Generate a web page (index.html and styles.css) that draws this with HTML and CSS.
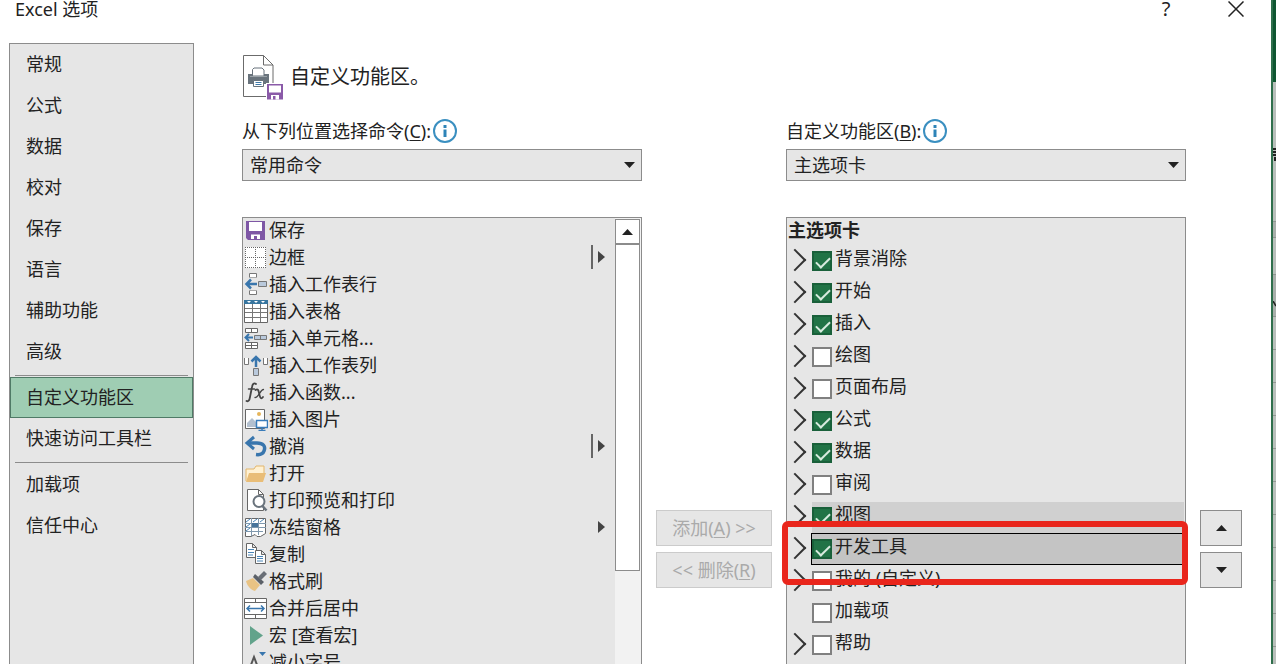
FILE: index.html
```html
<!DOCTYPE html>
<html lang="zh-CN">
<head>
<meta charset="utf-8">
<meta name="viewport" content="width=device-width, initial-scale=1">
<title>Excel 选项</title>
<link rel="stylesheet" href="styles.css">
</head>
<body>
<div class="dialog">
  <header class="titlebar">
    <h1 class="title">Excel 选项</h1>
    <button class="title-button" type="button" aria-label="帮助"><span class="help-mark">?</span></button>
    <button class="title-button" type="button" aria-label="关闭"><svg width="16" height="16" viewBox="0 0 16 16"><path d="M.5.5l15 15M15.500.5l-15 15" stroke="#222" stroke-width="1.500"/></svg></button>
  </header>
  <div class="body">
    <nav class="nav">
      <a class="nav-item" href="#">常规</a>
      <a class="nav-item" href="#">公式</a>
      <a class="nav-item" href="#">数据</a>
      <a class="nav-item" href="#">校对</a>
      <a class="nav-item" href="#">保存</a>
      <a class="nav-item" href="#">语言</a>
      <a class="nav-item" href="#">辅助功能</a>
      <a class="nav-item" href="#">高级</a>
      <hr class="nav-rule">
      <a class="nav-item nav-item-current" href="#" aria-current="page">自定义功能区</a>
      <a class="nav-item" href="#">快速访问工具栏</a>
      <hr class="nav-rule">
      <a class="nav-item" href="#">加载项</a>
      <a class="nav-item" href="#">信任中心</a>
    </nav>
    <main class="main">
      <div class="heading">
        <svg width="42" height="46" viewBox="0 0 42 46" fill="none">
          <path d="M1.500 1.500h20l9.500 9.500v31.500H1.500z" fill="#fff" stroke="#6b6b6b"/>
          <path d="M21.500 1.500V11H31" stroke="#6b6b6b"/>
          <path d="M6 20h21v10H6z" fill="#69737c"/>
          <path d="M10.500 22v-6.500l1.500-1.500h8l2 2v6z" fill="#fff" stroke="#69737c"/>
          <path d="M8 22.500h17" stroke="#9aa2a8"/>
          <path d="M11.500 26.500h10v6h-10z" fill="#fff" stroke="#69737c"/>
          <path d="M13.500 28.500h6m-6 2h6" stroke="#3f79a8"/>
          <path d="M24 29h19v18H24z" fill="#fff"/>
          <path d="M25 30h16v15.500H25z" fill="#8a5aa8"/>
          <path d="M27 31.500h12v7H27z" fill="#fff"/>
          <path d="M29 41h8v4.500h-8z" fill="#fff"/><path d="M31 42h2.500v3.500H31z" fill="#8a5aa8"/>
        </svg>
        <h2 class="heading-text">自定义功能区。</h2>
      </div>

      <div class="field field-commands">
        <label class="field-label" for="commands">从下列位置选择命令(<u>C</u>):</label>
        <svg class="info" width="24" height="24" viewBox="0 0 24 24"><circle cx="12" cy="12" r="11" fill="#fff" stroke="#3a8fc0" stroke-width="2"/><path d="M10.500 6h3v3h-3zM10.500 10.500h3V18h-3z" fill="#2e84b8"/></svg>
        <div class="select-wrap">
          <select class="select" id="commands"><option>常用命令</option></select>
          <svg class="select-arrow" width="11" height="6" viewBox="0 0 11 6"><path d="M0 0h11L5.500 6z" fill="#222"/></svg>
        </div>
      </div>
      <div class="field field-tabs">
        <label class="field-label" for="tabs">自定义功能区(<u>B</u>):</label>
        <svg class="info" width="24" height="24" viewBox="0 0 24 24"><circle cx="12" cy="12" r="11" fill="#fff" stroke="#3a8fc0" stroke-width="2"/><path d="M10.500 6h3v3h-3zM10.500 10.500h3V18h-3z" fill="#2e84b8"/></svg>
        <div class="select-wrap">
          <select class="select" id="tabs"><option>主选项卡</option></select>
          <svg class="select-arrow" width="11" height="6" viewBox="0 0 11 6"><path d="M0 0h11L5.500 6z" fill="#222"/></svg>
        </div>
      </div>

      <div class="panel commands">
        <ul class="list">
          <li><button class="command" type="button"><svg class="icon" viewBox="0 0 24 24"><path d="M2 3h19v19H4l-2-2z" fill="#7e57a5"/><path d="M5 4h13v9H5z" fill="#fff"/><path d="M6 16h11v6H6z" fill="#7e57a5"/><path d="M7 16.500h9V21h-3v-3h-3v3H7z" fill="#fff"/></svg>保存</button></li>
          <li><button class="command" type="button"><svg class="icon" viewBox="0 0 24 24"><path d="M1 2h21v21H1z" fill="#fff"/><path d="M1 2.500h21M1 12.500h21M1 22.500h21M1.500 2v21M11.500 2v21M21.500 2v21" stroke="#666" stroke-dasharray="1 1"/></svg>边框<span class="split"></span><svg class="more" width="7" height="12" viewBox="0 0 7 12"><path d="M0 0l7 6-7 6z"/></svg></button></li>
          <li><button class="command" type="button"><svg class="icon" viewBox="0 0 24 24" fill="#fff"><path d="M5.500 5V1.500h7V5M5.500 19v3.500h7V19" stroke="#777"/><path d="M5 5.500h8M5 18.500h8" stroke="#aaa"/><path d="M14.500 9.500h8v5h-8z" fill="#b9c9dc" stroke="#777"/><path d="M13 12H3M7 7.500L2.500 12 7 16.500" fill="none" stroke="#3976ad" stroke-width="2.500"/></svg>插入工作表行</button></li>
          <li><button class="command" type="button"><svg class="icon" viewBox="0 0 24 24"><path d="M.5 1.500h23v22H.5z" fill="#fff" stroke="#666"/><path d="M0 1h24v4H0z" fill="#37759f"/><path d="M3 2h4L5 4zM10 2h4l-2 2zM17 2h4l-2 2z" fill="#fff"/><path d="M1 9.500h22M1 13.500h22M1 18.500h22M8.500 5v18M16.500 5v18" stroke="#777"/></svg>插入表格</button></li>
          <li><button class="command" type="button"><svg class="icon" viewBox="0 0 24 24" fill="#fff"><path d="M1.500 2.500h12v4h-12zM7.500 2.500v4M1.500 16.500h12v6h-12zM7.500 16.500v6M1.500 19.500h12" stroke="#666"/><path d="M10.500 9.500h12v4h-12zM16.500 9.500v4" fill="#b9c9dc" stroke="#777"/><path d="M9 11.500H2M5 8l-3.500 3.500L5 15" fill="none" stroke="#3976ad" stroke-width="2"/></svg>插入单元格...</button></li>
          <li><button class="command" type="button"><svg class="icon" viewBox="0 0 24 24" fill="none"><path d="M.5 5v6.500h4V5M19.500 5v6.500h4V5" fill="#fff" stroke="#777"/><path d="M9.500 15.500h5v7h-5z" fill="#b9c9dc" stroke="#777"/><path d="M12 14V5M7.500 8.500L12 4l4.500 4.500" stroke="#3976ad" stroke-width="2.500"/></svg>插入工作表列</button></li>
          <li><button class="command" type="button"><svg class="icon" viewBox="0 0 24 24" fill="none" stroke="#444" stroke-linecap="round"><path d="M12 4c-2-1.500-3.500 0-4 3L6 17c-.5 3-1.500 5-3.500 4" stroke-width="1.800"/><path d="M4.500 9h6" stroke-width="1.500"/><path d="M11.500 10c3-2 3 1 4 5s2 4 3.500 2" stroke-width="1.800"/><path d="M19.500 9.500c-3 0-5 8-8.500 8" stroke-width="1.300"/></svg>插入函数...</button></li>
          <li><button class="command" type="button"><svg class="icon" viewBox="0 0 24 24"><path d="M1.500 2.500h19v19h-19z" fill="#fff" stroke="#666"/><circle cx="15" cy="7" r="2" fill="#e6b55a"/><path d="M3 20v-4l5-5 5 5v4z" fill="#b3c0cf"/><path d="M12.500 13.500h11v7h-11z" fill="#fff" stroke="#397cba" stroke-width="1.500"/><path d="M18 20v3.500M14.500 23.500h7" stroke="#397cba" stroke-width="1.500"/></svg>插入图片</button></li>
          <li><button class="command" type="button"><svg class="icon" viewBox="0 0 24 24" fill="none" stroke="#3976ad"><path d="M3 9h10c6 0 9 3 7 8-1 3-4 4-8 3.500" stroke-width="3.500"/><path d="M10 3L3 9l7 6" stroke-width="3"/></svg>撤消<span class="split"></span><svg class="more" width="7" height="12" viewBox="0 0 7 12"><path d="M0 0l7 6-7 6z"/></svg></button></li>
          <li><button class="command" type="button"><svg class="icon" viewBox="0 0 24 24"><path d="M2 20V8h8l2-3h8v7" fill="#fff1d2" stroke="#e2b66d"/><path d="M2 21l3-9h17l-3 9z" fill="#e9bd77"/></svg>打开</button></li>
          <li><button class="command" type="button"><svg class="icon" viewBox="0 0 24 24" fill="none"><path d="M3.500 1.500h11l5 5v16h-16z" fill="#fff" stroke="#666"/><path d="M14.500 1.500v5h5" stroke="#666"/><circle cx="15" cy="13.500" r="5.500" fill="#fff" stroke="#69737c" stroke-width="2"/><path d="M18.500 18l4 4.500" stroke="#69737c" stroke-width="2.500"/></svg>打印预览和打印</button></li>
          <li><button class="command" type="button"><svg class="icon" viewBox="0 0 24 24"><path d="M1.500 3.500h20v15l-5 3H13l-2-2-4 2H1.500z" fill="#fff" stroke="#666"/><path d="M1 8.500h21M1 12.500h21M1 16.500h18M7.500 3v18M14.500 3v17" stroke="#7f98ad"/><path d="M8 8h6v4H8z" fill="#48749b"/><path d="M2 7l4-3M9 7l4-3M16 7l4-3M2 12l4-3M2 16l4-3" stroke="#4b86b8"/></svg>冻结窗格<svg class="more more-alone" width="7" height="12" viewBox="0 0 7 12"><path d="M0 0l7 6-7 6z"/></svg></button></li>
          <li><button class="command" type="button"><svg class="icon" viewBox="0 0 24 24" fill="#fff" stroke="#666"><path d="M2.500 1.500h6l4 4v10h-10zM8.500 1.500v4h4"/><path d="M4 7.500h6M4 10.500h6M4 13h5" stroke="#4b86b8"/><path d="M11.500 8.500h6l4 4v9h-10zM17.500 8.500v4h4"/><path d="M13 14.500h6M13 16.500h6M13 19h6" stroke="#4b86b8"/></svg>复制</button></li>
          <li><button class="command" type="button"><svg class="icon" viewBox="0 0 24 24"><path d="M2 12l7-3 7 7-5 6c-4-1-8-5-9-10z" fill="#e9c384"/><path d="M9 8l2-3 9 8-3 3z" fill="#5b6068"/><path d="M14 8l6-6 3 3-6 6z" fill="#696e76"/></svg>格式刷</button></li>
          <li><button class="command" type="button"><svg class="icon" viewBox="0 0 24 24" fill="none"><path d="M.5 2.500h22v20H.5z" fill="#fff" stroke="#666"/><path d="M0 6.500h23M0 18.500h23M11.500 2v4M11.500 19v4" stroke="#666"/><path d="M3 12.500h17M6 9.500l-3 3 3 3M17 9.500l3 3-3 3" stroke="#3976ad" stroke-width="1.500"/></svg>合并后居中</button></li>
          <li><button class="command" type="button"><svg class="icon" viewBox="0 0 24 24"><path d="M6 3l13 9.500L6 22z" fill="#62a38b"/></svg>宏 [查看宏]</button></li>
          <li><button class="command" type="button"><svg class="icon" viewBox="0 0 24 24"><path d="M5 20L10 7l5 13M7 15.500h6" fill="none" stroke="#555" stroke-width="2"/><path d="M15 2h7l-3.500 4z" fill="#3976ad"/></svg>减小字号</button></li>
        </ul>
        <div class="scrollbar">
          <button class="scroll-up" type="button" aria-label="向上滚动"><svg width="11" height="6" viewBox="0 0 11 6"><path d="M0 6h11L5.500 0z" fill="#222"/></svg></button>
          <div class="scroll-thumb"></div>
        </div>
      </div>

      <div class="transfer">
        <button class="box-button" type="button" disabled>添加(<u>A</u>) &gt;&gt;</button>
        <button class="box-button" type="button" disabled>&lt;&lt; 删除(<u>R</u>)</button>
      </div>

      <div class="tabs">
        <div class="panel tree">
          <div class="tree-title">主选项卡</div>
          <ul class="tree-list">
            <li class="node"><button class="expand" type="button" aria-label="展开"></button><label class="node-label"><input class="check" type="checkbox" checked>背景消除</label></li>
            <li class="node"><button class="expand" type="button" aria-label="展开"></button><label class="node-label"><input class="check" type="checkbox" checked>开始</label></li>
            <li class="node"><button class="expand" type="button" aria-label="展开"></button><label class="node-label"><input class="check" type="checkbox" checked>插入</label></li>
            <li class="node"><button class="expand" type="button" aria-label="展开"></button><label class="node-label"><input class="check" type="checkbox">绘图</label></li>
            <li class="node"><button class="expand" type="button" aria-label="展开"></button><label class="node-label"><input class="check" type="checkbox">页面布局</label></li>
            <li class="node"><button class="expand" type="button" aria-label="展开"></button><label class="node-label"><input class="check" type="checkbox" checked>公式</label></li>
            <li class="node"><button class="expand" type="button" aria-label="展开"></button><label class="node-label"><input class="check" type="checkbox" checked>数据</label></li>
            <li class="node"><button class="expand" type="button" aria-label="展开"></button><label class="node-label"><input class="check" type="checkbox">审阅</label></li>
            <li class="node"><button class="expand" type="button" aria-label="展开"></button><label class="node-label node-hover"><input class="check" type="checkbox" checked>视图</label></li>
            <li class="node"><button class="expand" type="button" aria-label="展开"></button><label class="node-label node-selected"><input class="check" type="checkbox" checked>开发工具</label></li>
            <li class="node"><button class="expand" type="button" aria-label="展开"></button><label class="node-label"><input class="check" type="checkbox">我的 (自定义)</label></li>
            <li class="node node-leaf"><label class="node-label"><input class="check" type="checkbox">加载项</label></li>
            <li class="node"><button class="expand" type="button" aria-label="展开"></button><label class="node-label"><input class="check" type="checkbox">帮助</label></li>
          </ul>
        </div>
        <div class="highlight"></div>
      </div>

      <div class="reorder">
        <button class="box-button" type="button" aria-label="上移"><svg width="11" height="6" viewBox="0 0 11 6"><path d="M0 6h11L5.500 0z" fill="#222"/></svg></button>
        <button class="box-button" type="button" aria-label="下移"><svg width="11" height="6" viewBox="0 0 11 6"><path d="M0 0h11L5.500 6z" fill="#222"/></svg></button>
      </div>
    </main>
  </div>
</div>
<div class="workbook">
  <div class="workbook-title"></div>
  <div class="workbook-ribbon"><svg width="3" height="14" viewBox="0 0 3 14"><path d="M0 1h3v2H0zM0 4h3v2H0zM0 7h3v2H0zM1 10h2v4H1z" fill="#222"/></svg></div>
  <div class="workbook-band"></div>
  <div class="workbook-bar"></div>
  <div class="workbook-head"><svg width="3" height="6" viewBox="0 0 3 6"><path d="M0 0l3 5" stroke="#222" stroke-width="1.500"/></svg></div>
  <div class="workbook-cells"></div>
</div>
</body>
</html>
```
FILE: styles.css
```css
* {
  box-sizing: border-box;
}

body {
  margin: 0;
  height: 100vh;
  display: flex;
  overflow: hidden;
  background: #fff;
  color: #222;
  font: 18px/24px "Noto Sans", "Noto Sans CJK SC", sans-serif;
}

button,
select,
input {
  margin: 0;
  padding: 0;
  border: 0;
  color: inherit;
  font: inherit;
}

button {
  background: none;
}

svg {
  flex: none;
}

u {
  text-underline-offset: 2px;
  text-decoration-thickness: 1px;
}

ul {
  margin: 0;
  padding: 0;
  list-style: none;
}

.dialog {
  flex: 1;
  min-width: 0;
  display: flex;
  flex-direction: column;
}

.titlebar {
  display: flex;
  align-items: flex-start;
  height: 43px;
  padding: 0 18px 0 15px;
}

.title {
  flex: 1;
  margin: 0;
  font-size: 18px;
  font-weight: 400;
  line-height: 18px;
}

.title-button {
  display: flex;
  align-items: center;
  justify-content: center;
  width: 34px;
  height: 18px;
  margin-left: 36px;
}

.help-mark {
  font-size: 20px;
  line-height: 18px;
}

.body {
  flex: 1;
  min-height: 0;
  display: flex;
  gap: 48px;
  padding: 0 29px 0 9px;
}

.nav {
  flex: none;
  width: 185px;
  border: 1px solid #8c8c8c;
  border-bottom: 0;
  background: #e6e6e6;
}

.nav-item {
  display: block;
  padding: 0 16px;
  color: inherit;
  line-height: 41px;
  text-decoration: none;
}

.nav-item-current {
  padding: 0 15px;
  border: 1px solid #4f7a66;
  background: #9fcdb3;
  line-height: 39px;
}

.nav-rule {
  height: 1px;
  margin: 3px 5px 1px;
  border: 0;
  background: #8c8c8c;
}

.main {
  flex: 1;
  min-width: 0;
  display: grid;
  grid-template-columns: minmax(0, 1fr) 116px minmax(0, 1fr) 42px;
  grid-template-rows: 46px 62px minmax(0, 1fr);
  column-gap: 14px;
  padding-top: 11px;
}

.heading {
  grid-column: 1 / -1;
  display: flex;
  align-items: center;
  gap: 6px;
}

.heading-text {
  margin: 0;
  font-size: 20px;
  font-weight: 400;
}

.field {
  margin-top: 19px;
  display: flex;
  flex-wrap: wrap;
  align-content: flex-start;
  row-gap: 6px;
}

.field-commands {
  grid-column: 1;
}

.field-tabs {
  grid-column: 3;
}

.info {
  margin-left: 2px;
}

.select-wrap {
  display: grid;
  flex: 0 0 100%;
  align-items: center;
}

.select {
  grid-area: 1 / 1;
  width: 100%;
  height: 32px;
  padding: 0 7px;
  appearance: none;
  border: 1px solid #8c8c8c;
  border-radius: 0;
  background: #e6e6e6;
}

.select-arrow {
  grid-area: 1 / 1;
  justify-self: end;
  margin-right: 7px;
  pointer-events: none;
}

.panel {
  min-height: 0;
  overflow: hidden;
  border: 1px solid #8c8c8c;
  border-bottom: 0;
  background: #e6e6e6;
}

.commands,
.transfer,
.tabs,
.reorder {
  grid-row: 3;
  margin-top: 55px;
}

.commands {
  grid-column: 1;
  display: flex;
}

.list {
  flex: 1;
  min-width: 0;
}

.command {
  display: flex;
  align-items: center;
  width: 100%;
  height: 27px;
  padding: 0 10px 4px 1px;
  white-space: nowrap;
}

.icon {
  width: 24px;
  height: 24px;
  margin-right: 1px;
}

.split {
  width: 2px;
  height: 24px;
  margin-left: auto;
  background: #666;
}

.more {
  margin-left: 5px;
  fill: #444;
}

.more-alone {
  margin-left: auto;
}

.scrollbar {
  flex: none;
  width: 26px;
  display: flex;
  flex-direction: column;
  padding: 1px 1px 0 0;
  background: #f2f2f2;
}

.scroll-up {
  display: flex;
  align-items: center;
  justify-content: center;
  height: 25px;
  border: 1px solid #8c8c8c;
  background: #fff;
}

.scroll-thumb {
  height: 327px;
  border: 1px solid #8c8c8c;
  background: #fff;
}

.transfer,
.reorder {
  display: flex;
  flex-direction: column;
  gap: 6px;
  padding-top: 293px;
}

.transfer {
  grid-column: 2;
}

.reorder {
  grid-column: 4;
}

.box-button {
  display: flex;
  align-items: center;
  justify-content: center;
  height: 36px;
  border: 1px solid #8c8c8c;
  background: #e6e6e6;
  white-space: pre;
}

.box-button:disabled {
  border-color: #cbcbcb;
  color: #aaa;
}

.tabs {
  grid-column: 3;
  display: flex;
  position: relative;
}

.tree {
  flex: 1;
  min-width: 0;
  padding: 0 1px;
}

.tree-title {
  height: 28px;
  font-weight: 700;
}

.node {
  display: flex;
  height: 32px;
  padding-left: 5px;
}

.node-leaf {
  padding-left: 24px;
}

.expand {
  width: 13px;
  height: 20px;
  margin: 4px 6px 0 0;
}

.expand::before {
  content: "";
  display: block;
  width: 14px;
  height: 14px;
  border: solid #333;
  border-width: 2px 2px 0 0;
  transform: translateX(-6px) rotate(45deg);
}

.node-label {
  flex: 1;
  display: flex;
  gap: 3px;
}

.node-hover {
  background: #d0d0d0;
}

.node-selected {
  height: 30px;
  background: #c4c4c4;
  outline: 1px solid #000;
  outline-offset: 0;
}

.check {
  flex: none;
  width: 20px;
  height: 20px;
  margin-top: 5px;
  appearance: none;
  border: 2px solid #808080;
  background: #fff;
}

.check:checked {
  border-color: #19603a;
  background: #217346;
}

.check:checked::before {
  content: "";
  display: block;
  width: 12px;
  height: 6px;
  margin: 4px 2px;
  border: solid #d8ebdf;
  border-width: 0 0 2px 2px;
  transform: rotate(-45deg);
}

.highlight {
  position: absolute;
  top: 304px;
  left: -4px;
  right: -2px;
  height: 64px;
  border: 6px solid #e9261c;
  border-radius: 6px;
  pointer-events: none;
}

.workbook {
  flex: none;
  width: 5px;
  display: flex;
  flex-direction: column;
  border-left: 2px solid #2f6f4c;
  background: #b9bfbb;
}

.workbook-title {
  height: 82px;
  background: #0f5631;
}

.workbook-ribbon {
  height: 139px;
  padding-top: 65px;
  line-height: 0;
}

.workbook-band {
  height: 17px;
  border: solid #8f9691;
  border-width: 1px 0;
  background: #a9afab;
}

.workbook-bar {
  height: 36px;
}

.workbook-head {
  height: 43px;
  padding-top: 25px;
  border: solid #8f9691;
  border-width: 1px 0;
  background: #a9afab;
  line-height: 0;
}

.workbook-cells {
  flex: 1;
  background: repeating-linear-gradient(#b9bfbb 0 32px, #929893 32px 33px);
}
```
